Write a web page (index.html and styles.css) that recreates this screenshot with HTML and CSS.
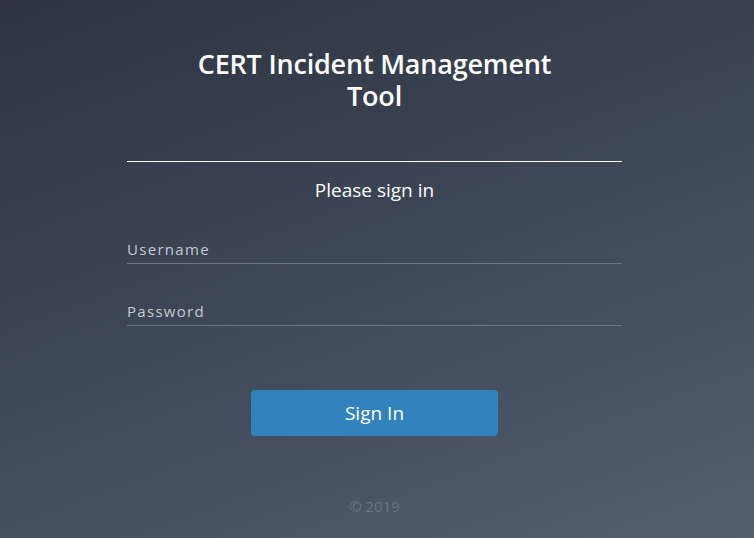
FILE: index.html
```html
<!DOCTYPE html>
<html lang="en">
<head>
<meta charset="utf-8">
<title>CERT Incident Management Tool</title>
<link rel="stylesheet" href="styles.css">
</head>
<body>
<main class="page">
  <div class="panel">
    <h1 class="title">CERT Incident Management Tool</h1>
    <hr class="rule">
    <p class="subtitle">Please sign in</p>
    <form class="form">
      <label class="field">
        <input class="input" type="text" placeholder="Username">
      </label>
      <label class="field">
        <input class="input" type="password" placeholder="Password">
      </label>
      <div class="actions">
        <button class="btn" type="button">Sign In</button>
      </div>
    </form>
    <footer class="footer">© 2019</footer>
  </div>
</main>
</body>
</html>
```
FILE: styles.css
```css
* { box-sizing: border-box; }
html, body { margin: 0; height: 100%; }
body {
  font-family: "Open Sans", "Noto Sans", sans-serif;
  background: linear-gradient(160deg, #2d3340 0%, #3f4858 50%, #535e6f 100%);
  color: #fff;
  overflow: hidden;
}
.page {
  height: 538px;
  display: flex;
  justify-content: center;
  padding-right: 5px;
}
.panel {
  width: 495px;
  display: flex;
  flex-direction: column;
  align-items: center;
  padding-top: 48px;
}
.title {
  margin: 0;
  width: 390px;
  text-align: center;
  font-size: 27px;
  font-weight: 600;
  line-height: 32px;
  letter-spacing: -0.2px;
}
.rule {
  width: 100%;
  margin: 49px 0 0;
  border: 0;
  border-top: 1px solid #fff;
}
.subtitle {
  margin: 16px 0 0;
  font-size: 19px;
  line-height: 24px;
}
.form {
  width: 100%;
  display: flex;
  flex-direction: column;
}
.field {
  display: block;
  margin-top: 36px;
}
.field + .field { margin-top: 36px; }
.input {
  width: 100%;
  background: transparent;
  border: 0;
  border-bottom: 1px solid #6b7483;
  color: #fff;
  font-family: inherit;
  font-size: 15px;
  letter-spacing: 1.3px;
  padding: 0 0 3px;
  line-height: 21px;
  outline: none;
}
.input::placeholder { color: #c7cad0; }
.actions {
  display: flex;
  justify-content: center;
  margin-top: 64px;
}
.btn {
  width: 247px;
  height: 46px;
  border: 0;
  border-radius: 4px;
  background: #3182bd;
  color: #fff;
  font-family: inherit;
  font-size: 19px;
}
.footer {
  margin-top: 60px;
  font-size: 15px;
  color: #6b7585;
}
```
